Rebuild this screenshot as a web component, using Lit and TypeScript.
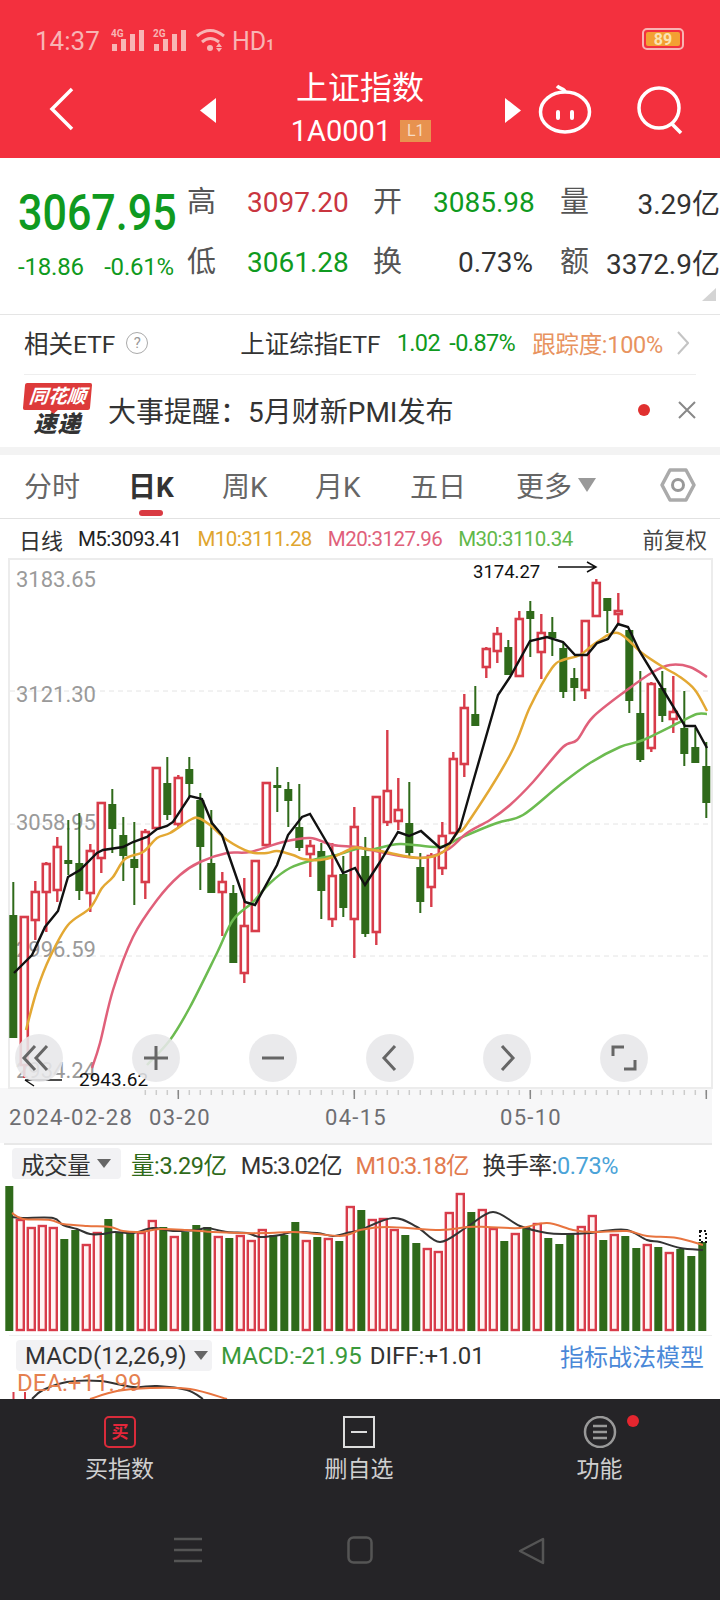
import { LitElement, html, css, svg } from "lit";
import { customElement } from "lit/decorators.js";

const RED = "#d83c4a";
const GREEN = "#2f6a1a";
const X0 = 13.3;
const PITCH = 11;

// [rising, high, bodyTop, bodyBottom, low] in page y
const candles: [number, number, number, number, number][] = [
  [0, 882, 915, 1038, 1038], [1, 917, 917, 1065, 1078], [1, 881, 892, 920, 940], [1, 862, 864, 892, 932],
  [1, 837, 847, 890, 902], [0, 820, 860, 864, 875], [0, 813, 863, 891, 900], [1, 844, 851, 893, 912],
  [1, 803, 803, 858, 873], [0, 789, 804, 829, 853], [0, 817, 835, 856, 881], [0, 822, 859, 868, 905],
  [1, 829, 832, 882, 899], [1, 768, 768, 828, 828], [0, 757, 783, 815, 820], [1, 775, 778, 824, 828],
  [0, 757, 769, 784, 797], [0, 793, 800, 847, 890], [0, 810, 863, 893, 893], [1, 872, 882, 892, 936],
  [0, 885, 893, 963, 963], [1, 878, 926, 973, 983], [1, 861, 861, 931, 931], [1, 783, 783, 845, 845],
  [0, 767, 785, 788, 812], [0, 782, 789, 801, 827], [0, 784, 827, 848, 851], [1, 840, 846, 854, 877],
  [0, 843, 851, 891, 919], [1, 843, 876, 919, 927], [0, 856, 874, 908, 917], [1, 807, 827, 919, 958],
  [0, 837, 856, 934, 937], [1, 797, 797, 932, 945], [1, 730, 791, 822, 826], [1, 778, 810, 821, 830],
  [0, 782, 823, 853, 857], [0, 853, 867, 902, 913], [1, 853, 856, 887, 907], [1, 822, 836, 868, 875],
  [1, 752, 759, 833, 833], [1, 694, 708, 764, 777], [0, 686, 714, 726, 726], [1, 647, 649, 667, 678],
  [1, 627, 634, 651, 663], [0, 640, 647, 675, 675], [1, 611, 619, 676, 676], [0, 601, 611, 619, 657],
  [1, 614, 633, 652, 679], [0, 617, 632, 638, 656], [0, 643, 648, 692, 698], [0, 668, 678, 688, 701],
  [1, 621, 621, 690, 699], [1, 579, 583, 616, 616], [0, 598, 598, 611, 633], [1, 593, 611, 614, 623],
  [0, 630, 630, 701, 713], [0, 671, 713, 760, 762], [1, 682, 684, 748, 752], [0, 671, 688, 716, 722],
  [1, 676, 712, 719, 733], [0, 691, 728, 754, 766], [0, 728, 747, 763, 763], [0, 742, 766, 803, 818],
];

const m5 = "14,973 32,955 45,927 58,911 68,877 80,870 97,853 103,850 123,847 133,842 147,837 157,829 167,826 173,822 190,796 202,799 212,823 222,835 227,850 245,902 255,905 277,865 288,835 302,817 310,814 330,848 343,873 355,868 365,885 380,862 398,832 409,836 421,831 440,848 450,843 460,828 473,782 498,695 510,677 530,641 547,637 563,642 575,655 587,655 597,643 608,639 618,624 628,627 640,652 662,688 685,726 695,726 707,748";
const m10 = "26,1030 37,990 50,957 68,925 90,908 102,888 113,877 125,859 143,852 157,838 170,833 190,820 198,818 210,825 227,840 250,852 267,853 277,851 293,855 303,859 320,860 333,857 353,848 360,848 380,851 420,858 443,852 457,833 467,824 510,755 530,707 552,668 563,660 580,655 597,642 618,633 642,653 663,667 680,677 695,690 707,711";
const m20 = "92,1068 100,1043 113,990 133,937 157,900 180,875 200,862 227,853 250,852 283,842 310,838 333,845 357,847 380,852 420,858 447,850 467,833 490,820 510,805 533,782 563,747 577,740 593,717 627,690 653,672 670,665 690,667 707,677";
const m30 = "147,1065 170,1040 190,1007 217,953 233,920 253,902 270,883 290,868 317,859 337,855 360,848 370,850 400,844 440,847 460,838 497,823 523,815 560,785 590,763 620,747 643,740 680,722 697,714 707,714";

// bar tops in page y, colour comes from the candle above
const volTops = [1186, 1220, 1228, 1226, 1228, 1239, 1230, 1245, 1233, 1219, 1232, 1233, 1233, 1221, 1227, 1237, 1232, 1225, 1227, 1237, 1238, 1236, 1241, 1230, 1235, 1235, 1222, 1241, 1237, 1239, 1241, 1207, 1210, 1220, 1219, 1230, 1235, 1243, 1249, 1252, 1213, 1194, 1212, 1210, 1229, 1241, 1234, 1227, 1224, 1238, 1244, 1233, 1227, 1216, 1240, 1235, 1236, 1248, 1245, 1247, 1253, 1249, 1256, 1242];
const volBlack = "12,1217 23,1218 53,1218 63,1225 77,1229 90,1234 103,1234 115,1232 133,1233 153,1228 173,1231 197,1230 207,1228 227,1232 247,1233 260,1237 280,1235 293,1232 317,1233 333,1236 347,1233 360,1230 393,1218 417,1227 440,1242 467,1227 493,1212 520,1226 547,1233 567,1234 590,1233 603,1231 627,1230 647,1240 660,1242 680,1248 703,1250";
const volOrange = "12,1213 23,1219 50,1220 63,1224 87,1226 110,1227 123,1231 140,1232 160,1229 187,1230 213,1232 240,1233 267,1233 293,1232 317,1234 340,1236 353,1233 360,1230 387,1227 440,1230 467,1227 487,1227 520,1228 547,1223 573,1230 593,1232 627,1231 647,1236 677,1238 703,1245";

const dates = [["2024-02-28", 9], ["03-20", 149], ["04-15", 325], ["05-10", 500]] as const;
const prices = [["3183.65", 587], ["3121.30", 702], ["3058.95", 830], ["2996.59", 957], ["2934.24", 1078]] as const;

// catmull-rom through the points, the averages are curves in the reference
const smooth = (pts: string) => {
  const p = pts.split(" ").map((s) => s.split(",").map(Number));
  let d = `M${p[0][0]} ${p[0][1]}`;
  for (let i = 0; i < p.length - 1; i++) {
    const a = p[Math.max(i - 1, 0)];
    const b = p[i];
    const c = p[i + 1];
    const e = p[Math.min(i + 2, p.length - 1)];
    d += `C${b[0] + (c[0] - a[0]) / 6} ${b[1] + (c[1] - a[1]) / 6} ${c[0] - (e[0] - b[0]) / 6} ${c[1] - (e[1] - b[1]) / 6} ${c[0]} ${c[1]}`;
  }
  return d;
};

const renderCandle = (c: (typeof candles)[number], i: number) => {
  const x = X0 + PITCH * i;
  const [up, high, top, bottom, low] = c;
  if (!up) {
    return svg`<rect x=${x - 1} y=${high} width="2" height=${low - high} fill=${GREEN}></rect>
      <rect x=${x - 4} y=${top} width="8" height=${bottom - top} fill=${GREEN}></rect>`;
  }
  return svg`<rect x=${x - 1.2} y=${high} width="2.4" height=${low - high} fill=${RED}></rect>
    <rect x=${x - 3.5} y=${top} width="7" height=${bottom - top} fill="#fff" stroke=${RED} stroke-width="2.600"></rect>`;
};

const renderBar = (top: number, i: number) => {
  const x = 9.3 + PITCH * i;
  return candles[i][0]
    ? svg`<rect x=${x - 3.5} y=${top} width="7" height=${1330 - top} fill="#fff3f3" stroke=${RED} stroke-width="2.400"></rect>`
    : svg`<rect x=${x - 4} y=${top} width="8" height=${1331 - top} fill=${GREEN}></rect>`;
};

@customElement("app-root")
export class AppRoot extends LitElement {
  static styles = css`
    :host {
      display: flex;
      flex-direction: column;
      width: 720px;
      height: 1600px;
      overflow: hidden;
      background: #fff;
      font-family: Roboto, "Noto Sans CJK SC", sans-serif;
      color: #333;
    }
    svg { display: block; }
    .top { background: #f3303e; color: #fff; }
    .status {
      height: 62px;
      display: flex;
      align-items: center;
      padding: 20px 36px 0 35px;
      box-sizing: border-box;
      color: #f8b4b4;
    }
    .clock { font-size: 26px; width: 76px; }
    .hd { font-size: 25px; margin-left: 5px; }
    .hd small { font-size: 14px; font-weight: 700; }
    .batt {
      margin-left: auto;
      margin-top: -4px;
      width: 42px;
      height: 22px;
      box-sizing: border-box;
      border: 2px solid #f8b4b4;
      border-radius: 5px;
      padding: 2px;
      display: flex;
    }
    .batt span {
      flex: 1;
      background: #f3a033;
      border-radius: 2px;
      color: #fbe3b4;
      font-size: 16px;
      font-weight: 700;
      line-height: 15px;
      text-align: center;
    }
    .nav { height: 96px; display: flex; align-items: center; position: relative; }
    .nav > svg { position: absolute; left: 0; top: -62px; }
    .title { width: 720px; display: flex; flex-direction: column; align-items: center; }
    .title h1 { margin: 0; font-size: 32px; font-weight: 400; line-height: 44px; margin-top: -3px; }
    .code { display: flex; align-items: center; gap: 9px; font-size: 29px; line-height: 40px; margin: 1px 0 0 2px; }
    .badge {
      width: 31px;
      height: 22px;
      background: #e8924f;
      color: #f7dcc4;
      font-size: 16px;
      line-height: 22px;
      text-align: center;
    }
    .quote { height: 157px; flex: none; box-sizing: border-box; display: flex; position: relative; border-bottom: 1px solid #e5e5e5; }
    .price { width: 170px; padding-left: 18px; flex: none; box-sizing: content-box; margin-right: -1px; }
    .price .now {
      font-size: 50px;
      font-weight: 500;
      color: #0f9a20;
      line-height: 58px;
      margin-top: 26px;
      transform: scaleX(.86);
      transform-origin: left;
      white-space: nowrap;
    }
    .price .chg { display: flex; justify-content: space-between; width: 156px; margin-top: 11px; font-size: 24px; line-height: 28px; color: #0f9a20; letter-spacing: -.2px; }
    .stats { display: grid; grid-template-columns: 60px 126px 60px 127px 45px 115px; grid-auto-rows: 60px; padding-top: 14px; align-items: center; }
    .stats .k { font-size: 29px; color: #555; position: relative; top: -3px; }
    .stats .v { font-size: 28px; white-space: nowrap; }
    .v.up { color: #c9353f; }
    .v.down { color: #0f9a20; }
    .v.mid { text-align: right; padding-right: 27px; color: #333; }
    .v.end { text-align: right; color: #333; }
    .corner {
      position: absolute;
      right: 4px;
      bottom: 13px;
      border-left: 14px solid transparent;
      border-bottom: 13px solid #d4d4d4;
    }
    .etf {
      height: 60px;
      flex: none;
      box-sizing: border-box;
      margin: 0 24px;
      padding-bottom: 4px;
      display: flex;
      align-items: center;
      border-bottom: 1px solid #eee;
      font-size: 24.5px;
      color: #333;
      white-space: nowrap;
    }
    .etf .help {
      width: 20px;
      height: 20px;
      border: 1px solid #aaa;
      border-radius: 50%;
      color: #999;
      font-size: 15px;
      line-height: 20px;
      text-align: center;
      margin-left: 11px;
    }
    .etf .name { margin-left: 92px; }
    .etf .nums { margin-left: 16px; color: #0f9a20; font-size: 23.5px; word-spacing: 4px; letter-spacing: -.6px; }
    .etf .track { margin-left: 17px; color: #e8935f; font-size: 23.5px; letter-spacing: -.3px; }
    .etf svg { margin-left: 14px; }
    .news { height: 72px; flex: none; display: flex; align-items: center; padding: 0 24px 3px; box-sizing: border-box; }
    .logo { width: 67px; height: 56px; flex: none; margin-top: 2px; position: relative; }
    .logo b {
      display: block;
      height: 27px;
      background: #dd3a3a;
      color: #fff;
      font-size: 19px;
      line-height: 27px;
      text-align: center;
      font-style: italic;
      transform: skewX(-5deg);
      border-radius: 2px;
    }
    .logo b::after {
      content: "";
      position: absolute;
      left: 27px;
      top: 27px;
      border-left: 4px solid transparent;
      border-right: 4px solid transparent;
      border-top: 4px solid #dd3a3a;
    }
    .logo i { display: block; font-size: 23px; line-height: 29px; font-weight: 900; color: #333; text-align: center; letter-spacing: 1px; }
    .news .txt { margin-left: 17px; font-size: 28px; color: #333; white-space: nowrap; }
    .news .dot { width: 12px; height: 12px; border-radius: 50%; background: #e0302f; margin-left: auto; margin-right: 28px; }
    .band { height: 8px; background: #f3f3f3; flex: none; }
    .tabs {
      height: 64px;
      flex: none;
      box-sizing: border-box;
      border-bottom: 1px solid #e2e2e2;
      display: grid;
      grid-template-columns: 106px 92px 93px 95px 106px 100px 1fr;
      padding: 0 24px 4px 24px;
      align-items: center;
      font-size: 28px;
      color: #666;
    }
    .tab { position: relative; display: flex; align-items: center; white-space: nowrap; }
    .tab.on { font-weight: 700; color: #333; margin-left: -2px; }
    .tab.on::after {
      content: "";
      position: absolute;
      left: 11px;
      top: 45px;
      width: 24px;
      height: 6px;
      border-radius: 3px;
      background: #d93a42;
    }
    .tab .tri {
      margin-left: 6px;
      border-left: 9px solid transparent;
      border-right: 9px solid transparent;
      border-top: 14px solid #999;
    }
    .tabs svg { justify-self: end; }
    .ma { height: 39px; flex: none; display: flex; align-items: center; padding: 0 13px 0 19px; font-size: 20.5px; white-space: nowrap; letter-spacing: -.55px; }
    .ma .day { font-size: 22px; color: #333; margin-right: -1px; letter-spacing: 0; }
    .ma span + span { margin-left: 16px; }
    .ma .fq { margin-left: auto; font-size: 21.5px; color: #444; letter-spacing: 0; }
    .chart { position: relative; height: 585px; flex: none; }
    .chart .btn {
      position: absolute;
      top: 476px;
      width: 48px;
      height: 48px;
      border-radius: 50%;
      background: rgba(231, 231, 233, .88);
      display: flex;
      align-items: center;
      justify-content: center;
    }
    .panel-head { height: 43px; flex: none; box-sizing: border-box; margin: 0 8px 0 4px; border-top: 2px solid #e8e8e8; display: flex; align-items: center; font-size: 23.5px; white-space: nowrap; padding: 0 0 4px 8px; letter-spacing: -.4px; }
    .panel-head .m { letter-spacing: -1px; margin-left: 14px; }
    .pill { background: #f2f2f4; border-radius: 4px; height: 31px; display: flex; align-items: center; font-size: 23.5px; color: #333; padding-left: 9px; box-sizing: border-box; }
    .pill::after {
      content: "";
      margin-left: 7px;
      border-left: 7px solid transparent;
      border-right: 7px solid transparent;
      border-top: 9px solid #666;
    }
    .vol { height: 149px; flex: none; overflow: hidden; }
    .macd { position: relative; height: 64px; box-sizing: border-box; flex: none; overflow: hidden; margin: 0 8px 0 9px; border-top: 1px solid #eee; }
    .macd svg { position: absolute; left: -9px; top: -1px; }
    .macd .row { position: relative; display: flex; align-items: center; height: 38px; padding: 3px 0 2px 7px; box-sizing: border-box; font-size: 24px; white-space: nowrap; }
    .macd .model { margin-left: auto; margin-right: 8px; color: #4a88d8; font-size: 24px; letter-spacing: 0; }
    .macd .dea { position: absolute; left: 8px; top: 36px; color: #e5804f; font-size: 24px; line-height: 22px; }
    .foot { flex: 1; background: #252427; }
    .acts { display: grid; grid-template-columns: 239px 240px 241px; padding-top: 17px; }
    .act { position: relative; display: flex; flex-direction: column; align-items: center; color: #cfcfcf; font-size: 23px; line-height: 32px; gap: 6px; }
    .act svg { height: 32px; }
    .act .red { position: absolute; left: 148px; top: -1px; width: 12px; height: 12px; border-radius: 50%; background: #e5262f; }
    .sys { display: flex; justify-content: center; gap: 145px; padding-top: 50px; }
  `;

  render() {
    return html`
      <div class="top">
        ${this.renderStatus()}
        <div class="nav">
          ${this.renderNavIcons()}
          <div class="title">
            <h1>上证指数</h1>
            <div class="code"><span>1A0001</span><span class="badge">L1</span></div>
          </div>
        </div>
      </div>
      ${this.renderQuote()}
      <div class="etf">
        <span>相关ETF</span><span class="help">?</span>
        <span class="name">上证综指ETF</span>
        <span class="nums">1.02 -0.87%</span>
        <span class="track">跟踪度:100%</span>
        <svg width="12" height="24" viewBox="0 0 12 24"><path d="M1 1l10 11L1 23" fill="none" stroke="#c4c4c4" stroke-width="2"/></svg>
      </div>
      <div class="news">
        <div class="logo"><b>同花顺</b><i>速递</i></div>
        <span class="txt">大事提醒：5月财新PMI发布</span>
        <span class="dot"></span>
        <svg width="18" height="18" viewBox="0 0 18 18"><path d="M1 1l16 16M17 1L1 17" stroke="#888" stroke-width="2"/></svg>
      </div>
      <div class="band"></div>
      <div class="tabs">
        <span class="tab">分时</span>
        <span class="tab on">日K</span>
        <span class="tab">周K</span>
        <span class="tab">月K</span>
        <span class="tab">五日</span>
        <span class="tab">更多<i class="tri"></i></span>
        <svg width="36" height="36" viewBox="0 0 36 36"><path d="M10 3h16l8 15-8 15H10L2 18z" fill="none" stroke="#aaa" stroke-width="3.500" stroke-linejoin="round"/><circle cx="18" cy="18" r="5.500" fill="none" stroke="#999" stroke-width="3"/></svg>
      </div>
      <div class="ma">
        <span class="day">日线</span>
        <span style="color:#222">M5:3093.41</span>
        <span style="color:#dfa52e">M10:3111.28</span>
        <span style="color:#e0607a">M20:3127.96</span>
        <span style="color:#62b84a">M30:3110.34</span>
        <span class="fq">前复权</span>
      </div>
      ${this.renderChart()}
      <div class="panel-head">
        <span class="pill" style="width:109px">成交量</span>
        <span style="color:#2f6a1a;margin-left:10px">量:3.29亿</span>
        <span class="m">M5:3.02亿</span>
        <span class="m" style="color:#e27b4f">M10:3.18亿</span>
        <span style="margin-left:14px">换手率:<span style="color:#4aa3d8">0.73%</span></span>
      </div>
      <div class="vol">
        <svg width="720" height="149" viewBox="0 1186 720 149">
          ${volTops.map(renderBar)}
          <path d=${smooth(volBlack)} fill="none" stroke="#333" stroke-width="2"></path>
          <path d=${smooth(volOrange)} fill="none" stroke="#e8743f" stroke-width="2"></path>
          <rect x="700" y="1231" width="6" height="11" fill="#fff" stroke="#111" stroke-width="2" stroke-dasharray="2 2"></rect>
        </svg>
      </div>
      <div class="macd">
        <svg width="720" height="64" viewBox="0 1335 720 64">
          <path d="M13.500 1392v7M25 1392v7" stroke=${RED} stroke-width="2"></path>
          <path d=${smooth("32,1399 43,1390 67,1382 100,1381 133,1387 157,1386 187,1390 203,1399")} fill="none" stroke="#333" stroke-width="2"></path>
          <path d=${smooth("90,1399 117,1391 150,1388 190,1389 227,1399")} fill="none" stroke="#e8743f" stroke-width="2"></path>
        </svg>
        <div class="row">
          <span class="pill" style="width:196px;font-size:24px">MACD(12,26,9)</span>
          <span style="color:#3b9a3b;margin-left:9px">MACD:-21.95</span>
          <span style="margin-left:8px">DIFF:+1.01</span>
          <span class="model">指标战法模型</span>
        </div>
        <span class="dea">DEA:+11.99</span>
      </div>
      ${this.renderFoot()}
    `;
  }

  renderStatus() {
    const bars = (x: number) => svg`
      <rect x=${x} y="15" width="5" height="7" /><rect x=${x + 9} y="10" width="5" height="12" />
      <rect x=${x + 18} y="5" width="5" height="17" /><rect x=${x + 27} y="1" width="5" height="21" />`;
    return html`<div class="status">
      <span class="clock">14:37</span>
      <svg width="116" height="28" viewBox="0 0 116 28" fill="#f8b4b4" font-size="10" font-weight="700" font-family="Roboto, sans-serif">
        <g transform="translate(0 2)">${bars(1)}${bars(43)}</g>
        <text x="0" y="10">4G</text><text x="42" y="10">2G</text>
        <g fill="none" stroke="#f8b4b4" stroke-width="3">
          <path d="M86 9q13-11 27 0"/><path d="M91 15q8-7 17 0"/>
        </g>
        <circle cx="99" cy="21" r="3"/>
        <path d="M108 16l3 4h-6zM108 25l3-4h-6z"/>
      </svg>
      <span class="hd">HD<small>1</small></span>
      <span class="batt"><span>89</span></span>
    </div>`;
  }

  renderNavIcons() {
    return html`<svg width="720" height="158" viewBox="0 0 720 158">
      <path d="M72 89L52 109l20 20" fill="none" stroke="#fff" stroke-width="3.500"/>
      <path d="M216 98v25l-16-12.500z" fill="#fff"/>
      <path d="M505 98v25l16-12.500z" fill="#fff"/>
      <g fill="none" stroke="#fff" stroke-width="3.500">
        <ellipse cx="565" cy="112" rx="24.500" ry="20"/>
        <path d="M565 92c0-3-5-3-8-6"/>
        <circle cx="659" cy="108" r="20"/>
        <path d="M672 124l9 9"/>
      </g>
      <rect x="556" y="110" width="4" height="10" rx="2" fill="#fff"/>
      <rect x="570" y="110" width="4" height="10" rx="2" fill="#fff"/>
    </svg>`;
  }

  renderQuote() {
    return html`<div class="quote">
      <div class="price">
        <div class="now">3067.95</div>
        <div class="chg"><span>-18.86</span><span>-0.61%</span></div>
      </div>
      <div class="stats">
        <span class="k">高</span><span class="v up">3097.20</span>
        <span class="k">开</span><span class="v down mid" style="color:#0f9a20">3085.98</span>
        <span class="k">量</span><span class="v end">3.29亿</span>
        <span class="k">低</span><span class="v down">3061.28</span>
        <span class="k">换</span><span class="v mid">0.73%</span>
        <span class="k">额</span><span class="v end">3372.9亿</span>
      </div>
      <i class="corner"></i>
    </div>`;
  }

  renderChart() {
    const ticks: number[] = [];
    for (let x = 145.3; x < 710; x += PITCH) ticks.push(x);
    const major = [178.3, 354.3, 530.3, 706.3];
    const icons = [
      svg`<path d="M18 9l-11 12 11 12M30 9L19 21l11 12" transform="translate(2 3)" fill="none" stroke="#666" stroke-width="3"/>`,
      svg`<path d="M24 12v24M12 24h24" fill="none" stroke="#666" stroke-width="3"/>`,
      svg`<path d="M13 24h22" fill="none" stroke="#666" stroke-width="3"/>`,
      svg`<path d="M29 12L18 24l11 12" fill="none" stroke="#666" stroke-width="3"/>`,
      svg`<path d="M19 12l11 12-11 12" fill="none" stroke="#666" stroke-width="3"/>`,
      svg`<path d="M13 22v-9h11M35 26v9H24" fill="none" stroke="#666" stroke-width="3"/>`,
    ];
    const lefts = [15, 132, 249, 366, 483, 600];
    return html`<div class="chart">
      <svg width="720" height="585" viewBox="0 558 720 585" font-family="Roboto, sans-serif">
        <rect x="0" y="1088" width="712" height="55" fill="#f7f7f8"></rect>
        <rect x="9" y="559" width="703" height="529" fill="#fff" stroke="#ececec" stroke-width="2"></rect>
        <path d="M10 691H711M10 824H711M10 956H711" stroke="#e4e4e4" stroke-width="1" stroke-dasharray="5 4"></path>
        ${prices.map(([t, y]) => svg`<text x="16" y=${y} font-size="22" fill="#9a9a9a">${t}</text>`)}
        ${candles.map(renderCandle)}
        <path d=${smooth(m30)} fill="none" stroke="#6cbb50" stroke-width="2.500"></path>
        <path d=${smooth(m20)} fill="none" stroke="#e0607a" stroke-width="2.500"></path>
        <path d=${smooth(m10)} fill="none" stroke="#e3a833" stroke-width="2.500"></path>
        <polyline points=${m5} fill="none" stroke="#111" stroke-width="2.400"></polyline>
        <text x="473" y="578" font-size="18.500" fill="#111">3174.27</text>
        <path d="M558 567h38m-9-5l9 5-9 5" fill="none" stroke="#111" stroke-width="1.500"></path>
        <text x="79" y="1086" font-size="19" fill="#111">2943.62</text>
        <path d="M62 1080H25m9 6l-9-6" fill="none" stroke="#111" stroke-width="1.500"></path>
        ${ticks.map((x) => svg`<path d=${`M${x} 1090v5`} stroke="#ccc" stroke-width="1.500"></path>`)}
        ${major.map((x) => svg`<path d=${`M${x} 1090v9`} stroke="#888" stroke-width="1.500"></path>`)}
        ${dates.map(([t, x]) => svg`<text x=${x} y="1125" font-size="22" letter-spacing="1.300" fill="#6e6e72">${t}</text>`)}
      </svg>
      ${lefts.map((l, i) => html`<span class="btn" style="left:${l}px"><svg width="48" height="48" viewBox="0 0 48 48">${icons[i]}</svg></span>`)}
    </div>`;
  }

  renderFoot() {
    return html`<div class="foot">
      <div class="acts">
        <div class="act">
          <svg width="32" height="32" viewBox="0 0 32 32" font-family="'Noto Sans CJK SC', sans-serif">
            <rect x="1" y="1" width="30" height="30" rx="4" fill="none" stroke="#d92b3a" stroke-width="2"></rect>
            <text x="16" y="22" font-size="17" font-weight="700" text-anchor="middle" fill="#e5263a">买</text>
          </svg>
          买指数
        </div>
        <div class="act">
          <svg width="32" height="32" viewBox="0 0 32 32"><rect x="1" y="1" width="30" height="30" fill="none" stroke="#ddd" stroke-width="2"></rect><path d="M8 16h16" stroke="#ddd" stroke-width="2"></path></svg>
          删自选
        </div>
        <div class="act">
          <svg width="34" height="32" viewBox="0 0 34 32"><circle cx="17" cy="16" r="15" fill="none" stroke="#999" stroke-width="2.500"></circle><path d="M10 10h14M10 16h14M10 22h14" stroke="#999" stroke-width="2.500"></path></svg>
          功能
          <i class="red"></i>
        </div>
      </div>
      <div class="sys">
        <svg width="28" height="28" viewBox="0 0 28 28"><path d="M0 3h28M0 14h28M0 25h28" stroke="#555" stroke-width="2.500"></path></svg>
        <svg width="26" height="28" viewBox="0 0 26 28"><rect x="1.500" y="1.500" width="23" height="25" rx="5" fill="none" stroke="#555" stroke-width="2.500"></rect></svg>
        <svg width="28" height="30" viewBox="0 0 28 30"><path d="M25 3v24L2 15z" fill="none" stroke="#555" stroke-width="2.500" stroke-linejoin="round"></path></svg>
      </div>
    </div>`;
  }
}
